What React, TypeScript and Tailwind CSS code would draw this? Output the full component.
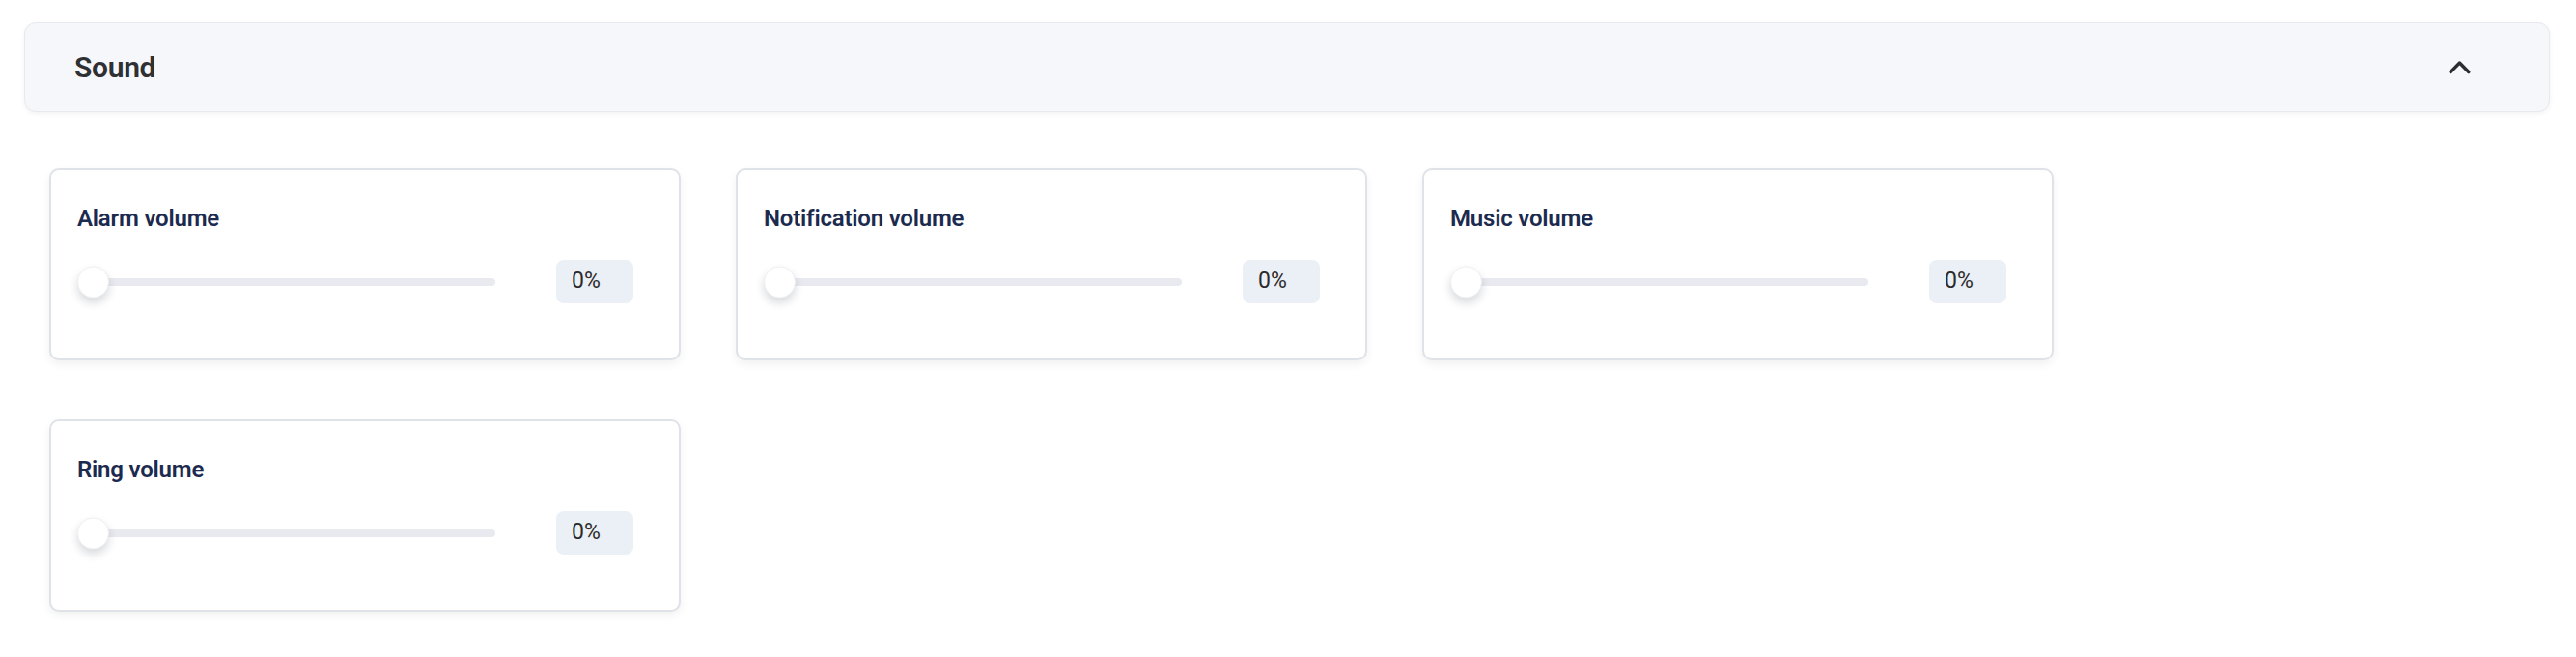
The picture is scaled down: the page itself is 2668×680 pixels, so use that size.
import { useState } from "react";

interface VolumeCardProps {
  label: string;
  value: number;
}

function VolumeCard({ label, value }: VolumeCardProps) {
  return (
    <div className="w-[654px] h-[199px] rounded-[10px] border-2 border-[#dfe2e7] bg-white shadow-[0_4px_10px_rgba(15,23,42,0.06)] pl-[27px] pr-[47px] pt-[34px]">
      <div className="text-[24px] leading-[32px] font-semibold text-[#1b2a4e] tracking-[-0.2px]">
        {label}
      </div>
      <div className="mt-[27px] flex items-center">
        {/* slider */}
        <div className="relative w-[433px] h-[45px] flex items-center">
          <div className="w-full h-[8px] rounded-full bg-[#e9eaef]" />
          <div
            className="absolute top-1/2 -translate-y-1/2 w-[33px] h-[33px] rounded-full bg-white border border-[#eef0f3] shadow-[0_5px_10px_rgba(15,23,42,0.16)]"
            style={{ left: `${(value / 100) * 400}px` }}
          />
        </div>
        <div className="ml-auto w-[80px] h-[45px] rounded-[8px] bg-[#ebeff6] flex items-center pl-[16px] text-[23px] text-[#2b2b2b]">
          {value}%
        </div>
      </div>
    </div>
  );
}

export default function App() {
  const [open, setOpen] = useState(true);

  const volumes = [
    { label: "Alarm volume", value: 0 },
    { label: "Notification volume", value: 0 },
    { label: "Music volume", value: 0 },
    { label: "Ring volume", value: 0 },
  ];

  return (
    <div className="min-h-[680px] bg-white pt-[23px] pl-[25px] pr-[27px] font-['Roboto','Liberation_Sans',sans-serif]">
      <button
        onClick={() => setOpen(!open)}
        className="w-full h-[93px] flex items-center justify-between rounded-[12px] border border-[#e7e9ec] bg-[#f6f7fa] shadow-[0_2px_5px_rgba(15,23,42,0.05)] pl-[51px] pr-[81px]"
      >
        <span className="text-[30px] font-semibold text-[#2e3034] tracking-[-0.3px]">Sound</span>
        <svg width="23" height="15" viewBox="0 0 23 15" fill="none">
          <polyline
            points={open ? "2.2,12.5 11.5,3 20.8,12.5" : "2.2,3 11.5,12.5 20.8,3"}
            stroke="#2b2d31"
            strokeWidth="3.4"
            strokeLinecap="round"
            strokeLinejoin="round"
          />
        </svg>
      </button>

      {open && (
        <div className="flex flex-wrap gap-x-[57px] gap-y-[61px] pt-[58px] pl-[26px]">
          {volumes.map((v) => (
            <VolumeCard key={v.label} label={v.label} value={v.value} />
          ))}
        </div>
      )}
    </div>
  );
}
